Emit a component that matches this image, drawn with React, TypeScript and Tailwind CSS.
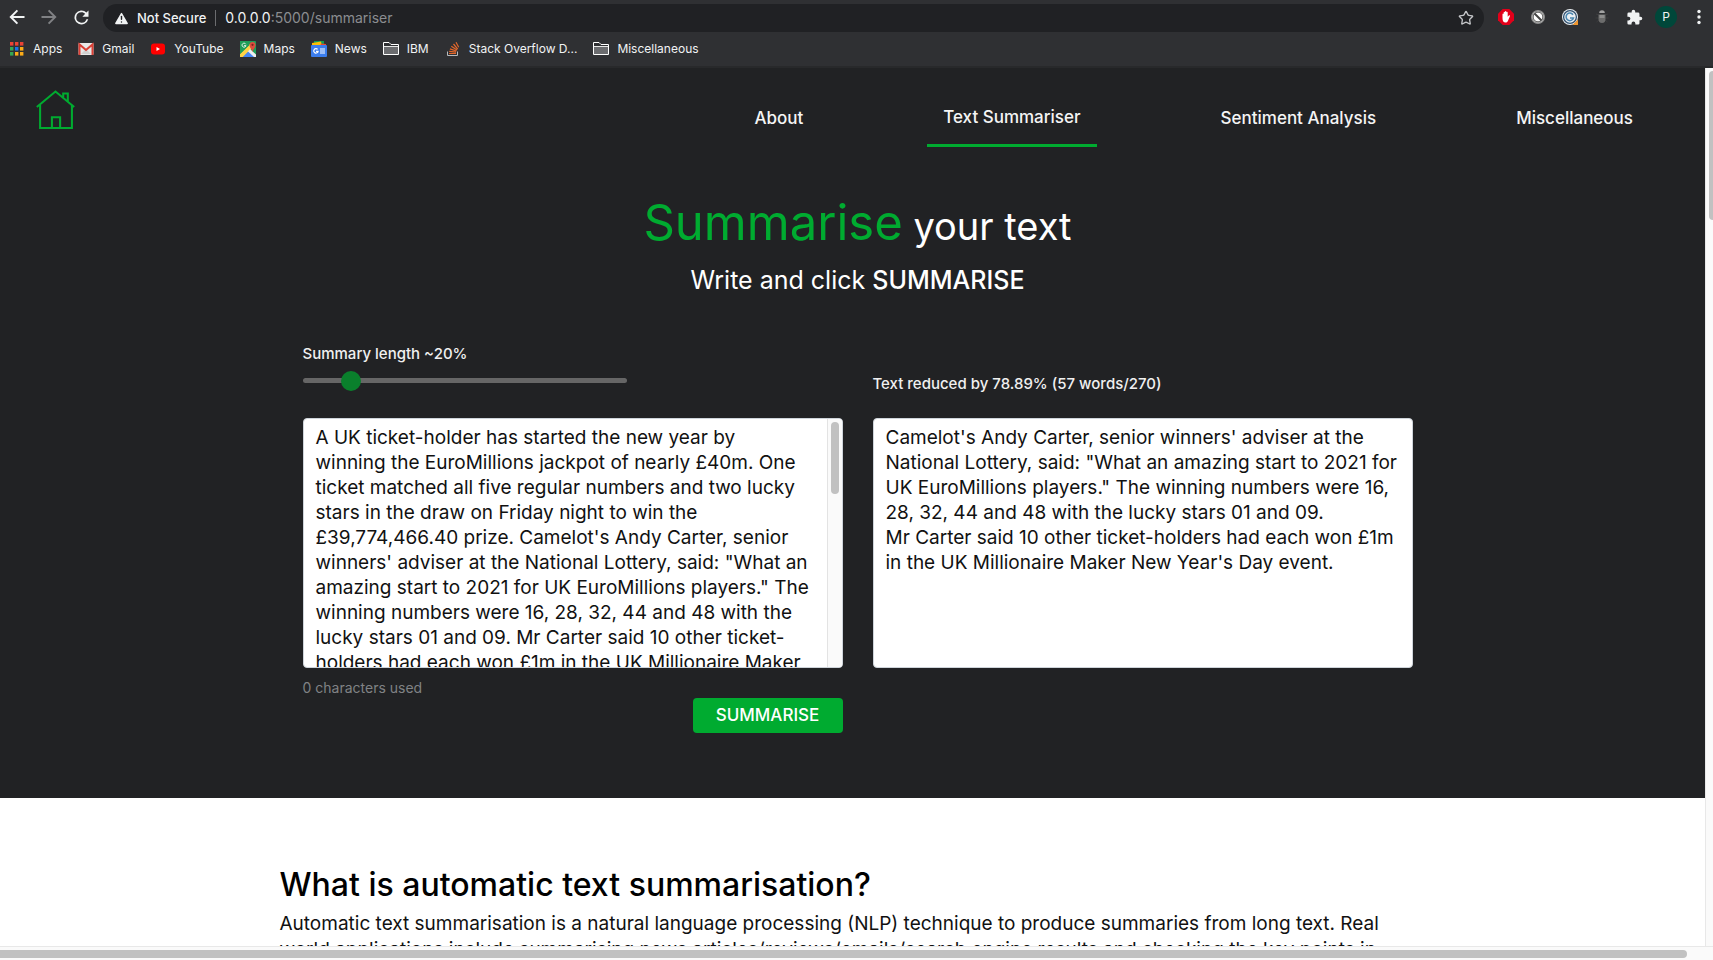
import React from "react";
import { Star, TriangleAlert } from "lucide-react";

const fill = "currentColor";

function Bookmark({ icon, label }: { icon: React.ReactNode; label: string }) {
  return (
    <a href="#" className="flex items-center gap-2 whitespace-nowrap">
      {icon}
      <span>{label}</span>
    </a>
  );
}

function AppsIcon() {
  const colors = ["#ea4335", "#ea4335", "#ea4335", "#34a853", "#1a73e8", "#fbab18", "#34a853", "#fbab18", "#fbab18"];
  return (
    <svg width="16" height="16" viewBox="0 0 16 16" aria-hidden="true">
      {colors.map((c, i) => (
        <rect key={i} x={1 + (i % 3) * 5} y={1 + Math.floor(i / 3) * 5} width="3.4" height="3.6" fill={c} />
      ))}
    </svg>
  );
}

function GmailIcon() {
  return (
    <svg width="16" height="16" viewBox="0 0 16 16" aria-hidden="true">
      <rect x="0.5" y="2" width="15" height="12" rx="1" fill="#e8e8e8" />
      <path d="M3 13l5-5 5 5z" fill="#d0d0d0" />
      <path d="M1.500 14V3.500L8 9l6.500-5.500V14" fill="none" stroke="#d93f35" strokeWidth="2" />
    </svg>
  );
}

function YouTubeIcon() {
  return (
    <svg width="16" height="16" viewBox="0 0 16 16" aria-hidden="true">
      <rect x="1" y="2.500" width="14" height="11" rx="3" fill="#f00" />
      <path d="M6.500 6v4L10 8z" fill="#fff" />
    </svg>
  );
}

function MapsIcon() {
  return (
    <svg width="16" height="16" viewBox="0 0 16 16" aria-hidden="true">
      <rect width="16" height="16" rx="1" fill="#1f9d58" />
      <path d="M0 16L8 8l8 8z" fill="#4285f4" />
      <path d="M0 13L10 3l3 3L3 16H0z" fill="#fdd247" />
      <path d="M3 16l5.500-5.500L14 16z" fill="#4285f4" />
      <path d="M8 10.500L10 8l6 5.500V16h-2z" fill="#eee" />
      <path d="M0 0h9v4.500L0 13z" fill="#1f9d58" />
      <path d="M12.500 11c-.5-3-3-4-3-7a3 3 0 016 0c0 3-2.500 4-3 7z" fill="#dd4b3e" />
      <circle cx="12.500" cy="3.800" r="1.100" fill="#7a231d" />
      <path d="M5.800 3.200a2 2 0 10.200 1.500H4" fill="none" stroke="#fff" strokeWidth="0.900" />
    </svg>
  );
}

function NewsIcon() {
  return (
    <svg width="16" height="16" viewBox="0 0 16 16" aria-hidden="true">
      <path d="M3 0h10v5H3z" fill="#0f9d58" />
      <path d="M1 2l9-1.500L11 5H1z" fill="#fbbc04" />
      <path d="M10 2.500l5 .5v3H9z" fill="#ea4335" />
      <rect y="4" width="16" height="12" rx="1" fill="#3b7ded" />
      <path d="M6.600 8.400a2.200 2.200 0 10.500 1.900H5" fill="none" stroke="#fff" strokeWidth="1.200" />
      <path d="M9 8h5M9 10h5M9 12h5" stroke="#fff" strokeWidth="1.100" />
    </svg>
  );
}

function FolderIcon() {
  return (
    <svg width="16" height="16" viewBox="0 0 16 16" aria-hidden="true">
      <path d="M.5 13.500v-12h5.500l2 2h7.500v10z" fill="#2f3033" stroke="#fff" />
      <path d="M1 6h14v7H1z" fill="#6b6c6f" />
      <path d="M1 5.500h14" stroke="#e8e8e8" />
    </svg>
  );
}

function StackIcon() {
  return (
    <svg width="16" height="16" viewBox="0 0 16 16" aria-hidden="true">
      <path d="M2.500 10.500V14.500H12.500V10.500" fill="none" stroke="#b8babd" />
      <path
        d="M4 12.500h7M4.200 10.300l6.900.8M4.900 7.900l6.500 2.100M6.300 5.300l5.700 3.700M8.500 3l4.200 5.200M11 1.300l2.700 5"
        stroke="#e3672b"
        strokeWidth="1.200"
      />
    </svg>
  );
}

function BlockerIcon() {
  return (
    <svg width="16" height="16" viewBox="0 0 16 16" aria-hidden="true">
      <path d="M4.700 0h6.600L16 4.700v6.600L11.300 16H4.700L0 11.300V4.700z" fill="#e2001a" />
      <path
        d="M4.500 9V5.200c0-.9 1.200-.9 1.200 0V3.300c0-.9 1.300-.9 1.300 0v-.6c0-.9 1.400-.9 1.400 0v.8c0-.9 1.300-.9 1.300 0v4.300l1.200-1.300c.6-.5 1.300 0 1 .7l-1.800 4.400C9.500 13 8.800 13.600 7.600 13.600 5.500 13.600 4.500 12 4.500 9z"
        fill="#fff"
      />
    </svg>
  );
}

function NoScriptIcon() {
  return (
    <svg width="16" height="16" viewBox="0 0 16 16" aria-hidden="true">
      <circle cx="8" cy="8" r="6.300" fill="#fff" stroke="#8b8b8b" strokeWidth="1.400" />
      <circle cx="8" cy="8" r="4.900" fill="#fff" stroke="#4c4c4c" strokeWidth="1" />
      <path d="M4.500 4.500l7 7" stroke="#444" strokeWidth="2" />
    </svg>
  );
}

function CommentIcon() {
  return (
    <svg width="16" height="16" viewBox="0 0 16 16" aria-hidden="true">
      <circle cx="8" cy="8" r="8" fill="#e9eef2" />
      <circle cx="8" cy="8" r="6.400" fill="none" stroke="#31506f" strokeWidth="1.300" />
      <path d="M11 5.700A3.800 3.800 0 1011.500 9H8" fill="none" stroke="#4a86b0" strokeWidth="1.500" />
      <path d="M16 10.500V16h-5.500z" fill="#f0962e" />
    </svg>
  );
}

function BugIcon() {
  return (
    <svg width="16" height="16" viewBox="0 0 16 16" aria-hidden="true">
      <path d="M2 5l3 1M14 5l-3 1M1.500 9H5M14.500 9H11M2.500 13L5 11M13.500 13L11 11" stroke="#3c3c3e" />
      <path d="M5.200 4a2.800 2.800 0 015.600 0z" fill="#a2a2a2" />
      <path d="M4.500 5.500h7V10a3.500 4 0 01-7 0z" fill="#6c6c6c" />
      <path d="M5.500 6h5v3h-5z" fill="#8d8d8d" />
    </svg>
  );
}

function BrowserChrome() {
  return (
    <header className="shrink-0 border-b-2 border-[#28292b] bg-[#2f3033] font-['Inter','Liberation_Sans',sans-serif] text-[#f1f3f4]">
      <div className="flex h-8 items-end">
        <div className="flex h-[30px] shrink-0 items-center gap-2 pl-[5px]">
          <button aria-label="Back" className="flex size-6 items-center justify-center">
            <svg width="24" height="24" viewBox="0 0 24 24" fill={fill}>
              <path d="M19.500 11H8.200l4.900-4.900-1.400-1.400L4.400 12l7.300 7.300 1.400-1.400L8.200 13h11.300z" />
            </svg>
          </button>
          <button aria-label="Forward" className="flex size-6 items-center justify-center text-[#808184]">
            <svg width="24" height="24" viewBox="0 0 24 24" fill={fill}>
              <path d="M4.500 11h11.300l-4.900-4.900 1.400-1.400 7.300 7.300-7.300 7.300-1.400-1.400 4.900-4.900H4.500z" />
            </svg>
          </button>
          <button aria-label="Reload" className="flex size-6 items-center justify-center">
            <svg width="21" height="21" viewBox="0 0 24 24" fill={fill}>
              <path d="M17.650 6.350A8 8 0 1019.730 14h-2.080A6 6 0 1112 6c1.660 0 3.140.69 4.220 1.780L13 11h7V4z" />
            </svg>
          </button>
        </div>
        <div className="ml-[10px] flex h-7 min-w-0 flex-1 items-center rounded-full bg-[#202124] px-[10px] text-sm">
          <TriangleAlert size={17} fill="#f1f3f4" stroke="#202124" strokeWidth={2} aria-hidden="true" />
          <span className="ml-[7px] text-[13px] font-medium whitespace-nowrap">Not Secure</span>
          <span className="mx-[9px] h-4 w-px bg-[#6b6c6f]" />
          <span className="min-w-0 flex-1">
            0.0.0.0<span className="text-[#8b8d90]">:5000/summariser</span>
          </span>
          <button aria-label="Bookmark this page">
            <Star size={16} strokeWidth={2} className="text-[#c4c6c9]" />
          </button>
        </div>
        <div className="flex h-[30px] shrink-0 items-center gap-4 pr-2 pl-[14px]">
          <BlockerIcon />
          <NoScriptIcon />
          <CommentIcon />
          <BugIcon />
          <svg width="17" height="17" viewBox="0 0 24 24" fill={fill} aria-hidden="true">
            <path d="M20.500 11H19V7a2 2 0 00-2-2h-4V3.500a2.500 2.500 0 00-5 0V5H4a2 2 0 00-2 2v3.800h1.500a2.700 2.700 0 010 5.400H2V20a2 2 0 002 2h3.800v-1.500a2.700 2.700 0 015.400 0V22H17a2 2 0 002-2v-4h1.500a2.500 2.500 0 000-5z" />
          </svg>
          <span className="-ml-1 flex size-[22px] items-center justify-center rounded-full bg-[#00473a] text-xs">P</span>
          <button aria-label="Menu" className="flex w-3 justify-center">
            <svg width="4" height="16" viewBox="0 0 4 16" fill={fill}>
              <circle cx="2" cy="2.500" r="1.700" />
              <circle cx="2" cy="8" r="1.700" />
              <circle cx="2" cy="13.500" r="1.700" />
            </svg>
          </button>
        </div>
      </div>
      <nav aria-label="Bookmarks" className="flex h-[34px] items-center gap-4 pl-[9px] text-xs">
        <Bookmark icon={<AppsIcon />} label="Apps" />
        <Bookmark icon={<GmailIcon />} label="Gmail" />
        <Bookmark icon={<YouTubeIcon />} label="YouTube" />
        <Bookmark icon={<MapsIcon />} label="Maps" />
        <Bookmark icon={<NewsIcon />} label="News" />
        <Bookmark icon={<FolderIcon />} label="IBM" />
        <Bookmark icon={<StackIcon />} label="Stack Overflow D..." />
        <Bookmark icon={<FolderIcon />} label="Miscellaneous" />
      </nav>
    </header>
  );
}

const article = `A UK ticket-holder has started the new year by
winning the EuroMillions jackpot of nearly £40m. One
ticket matched all five regular numbers and two lucky
stars in the draw on Friday night to win the
£39,774,466.40 prize. Camelot's Andy Carter, senior
winners' adviser at the National Lottery, said: "What an
amazing start to 2021 for UK EuroMillions players." The
winning numbers were 16, 28, 32, 44 and 48 with the
lucky stars 01 and 09. Mr Carter said 10 other ticket-
holders had each won £1m in the UK Millionaire Maker`;

const summary = `Camelot's Andy Carter, senior winners' adviser at the
National Lottery, said: "What an amazing start to 2021 for
UK EuroMillions players." The winning numbers were 16,
28, 32, 44 and 48 with the lucky stars 01 and 09.
Mr Carter said 10 other ticket-holders had each won £1m
in the UK Millionaire Maker New Year's Day event.`;

function SiteNav() {
  return (
    <nav className="flex items-start justify-between pt-[22px] pr-[66px] pl-9">
      <a href="#" aria-label="Home" className="text-[#00ab30]">
        <svg width="39" height="39" viewBox="0 0 38 38" fill="none" stroke="currentColor" strokeWidth="2">
          <path d="M.8 16.500L19 1.500l18.200 15" />
          <path d="M4 14.500V37h31V14.500" />
          <path d="M15.500 37V26.500h8V37" />
          <path d="M26.500 7V3.500h4.500V11" />
        </svg>
      </a>
      <div className="flex items-start gap-[108px] text-[17px] leading-6 font-medium text-[#f5f5f5]">
        <a href="#" className="px-4 py-4">About</a>
        <a href="#" aria-current="page" className="border-b-[3px] border-[#00ab30] px-4 py-[15px]">Text Summariser</a>
        <a href="#" className="px-4 py-4">Sentiment Analysis</a>
        <a href="#" className="px-4 py-4">Miscellaneous</a>
      </div>
    </nav>
  );
}

function Summariser() {
  return (
    <section className="bg-[#212224] pb-[65px] text-white">
      <SiteNav />
      <div className="mt-[46px] text-center">
        <h1 className="text-[38px] leading-[60px]">
          <span className="text-[49px] text-[#00ab30]">Summarise</span> your text
        </h1>
        <p className="mt-[6px] text-[25px] leading-9">
          Write and click <span className="font-medium">SUMMARISE</span>
        </p>
      </div>
      <form className="mx-auto mt-11 grid max-w-[1110px] grid-cols-2 gap-x-[30px]" onSubmit={(e) => e.preventDefault()}>
        <div className="flex h-[76px] flex-col">
          <label htmlFor="length" className="text-[15px] leading-6 font-medium text-[#f0f0f0]">
            Summary length ~20%
          </label>
          <input
            id="length"
            type="range"
            min={10}
            max={90}
            defaultValue={20}
            className="mt-3 h-[5px] w-3/5 appearance-none rounded-full bg-[#666] [&::-webkit-slider-thumb]:size-5 [&::-webkit-slider-thumb]:appearance-none [&::-webkit-slider-thumb]:rounded-full [&::-webkit-slider-thumb]:bg-[#0a802c]"
          />
        </div>
        <label htmlFor="summary" className="pt-[30px] text-[15px] leading-6 font-medium text-[#f0f0f0]">
          Text reduced by 78.89% (57 words/270)
        </label>
        <div className="flex h-[250px] overflow-hidden rounded border border-[#ced4da] bg-white">
          <textarea
            aria-label="Text to summarise"
            defaultValue={article}
            className="min-w-0 flex-1 resize-none overflow-hidden py-[6px] pl-3 text-[19px] leading-[25px] whitespace-pre text-[#111] outline-none"
          />
          <div className="w-[15px] shrink-0 border-l border-[#e3e3e3] bg-[#fafafa] pt-[3px] pl-[3px]">
            <div className="h-[72px] w-2 rounded-full bg-[#c1c1c1]" />
          </div>
        </div>
        <textarea
          id="summary"
          readOnly
          defaultValue={summary}
          className="h-[250px] resize-none overflow-hidden rounded border border-[#ced4da] bg-white py-[6px] pl-3 text-[19px] leading-[25px] whitespace-pre text-[#111] outline-none"
        />
        <div>
          <p className="pt-[9px] text-sm leading-[21px] text-[#808285]">0 characters used</p>
          <div className="flex justify-end">
            <button type="submit" className="h-[35px] w-[150px] rounded bg-[#00ab30] text-[17px] font-medium text-white">
              SUMMARISE
            </button>
          </div>
        </div>
      </form>
    </section>
  );
}

export default function App() {
  return (
    <div className="flex h-screen flex-col overflow-hidden bg-white font-['Inter','Liberation_Sans',sans-serif]">
      <BrowserChrome />
      <div className="flex min-h-0 flex-1">
        <main className="min-w-0 flex-1 overflow-hidden">
          <div className="w-[calc(100%+10px)]">
            <Summariser />
            <section className="mx-auto max-w-[1156px] pt-[65px] text-[#111]">
              <h2 className="text-[32px] leading-[44px] font-medium text-black">What is automatic text summarisation?</h2>
              <p className="mt-1 text-[19px] leading-[26px] whitespace-nowrap">
                Automatic text summarisation is a natural language processing (NLP) technique to produce summaries from long text. Real
                <br />
                world applications include summarising news articles/reviews/emails/search engine results and checking the key points in
              </p>
            </section>
          </div>
        </main>
        <div className="w-2 shrink-0 border-l border-[#e8e8e8] bg-[#fafafa] pt-[3px] pl-[3px]">
          <div className="h-[149px] rounded-l-full bg-[#c1c1c1]" />
        </div>
      </div>
      <div className="h-[14px] shrink-0 border-t border-[#e8e8e8] bg-[#fafafa] pt-[3px] pr-[26px]">
        <div className="h-2 rounded-r-full bg-[#c1c1c1]" />
      </div>
    </div>
  );
}
